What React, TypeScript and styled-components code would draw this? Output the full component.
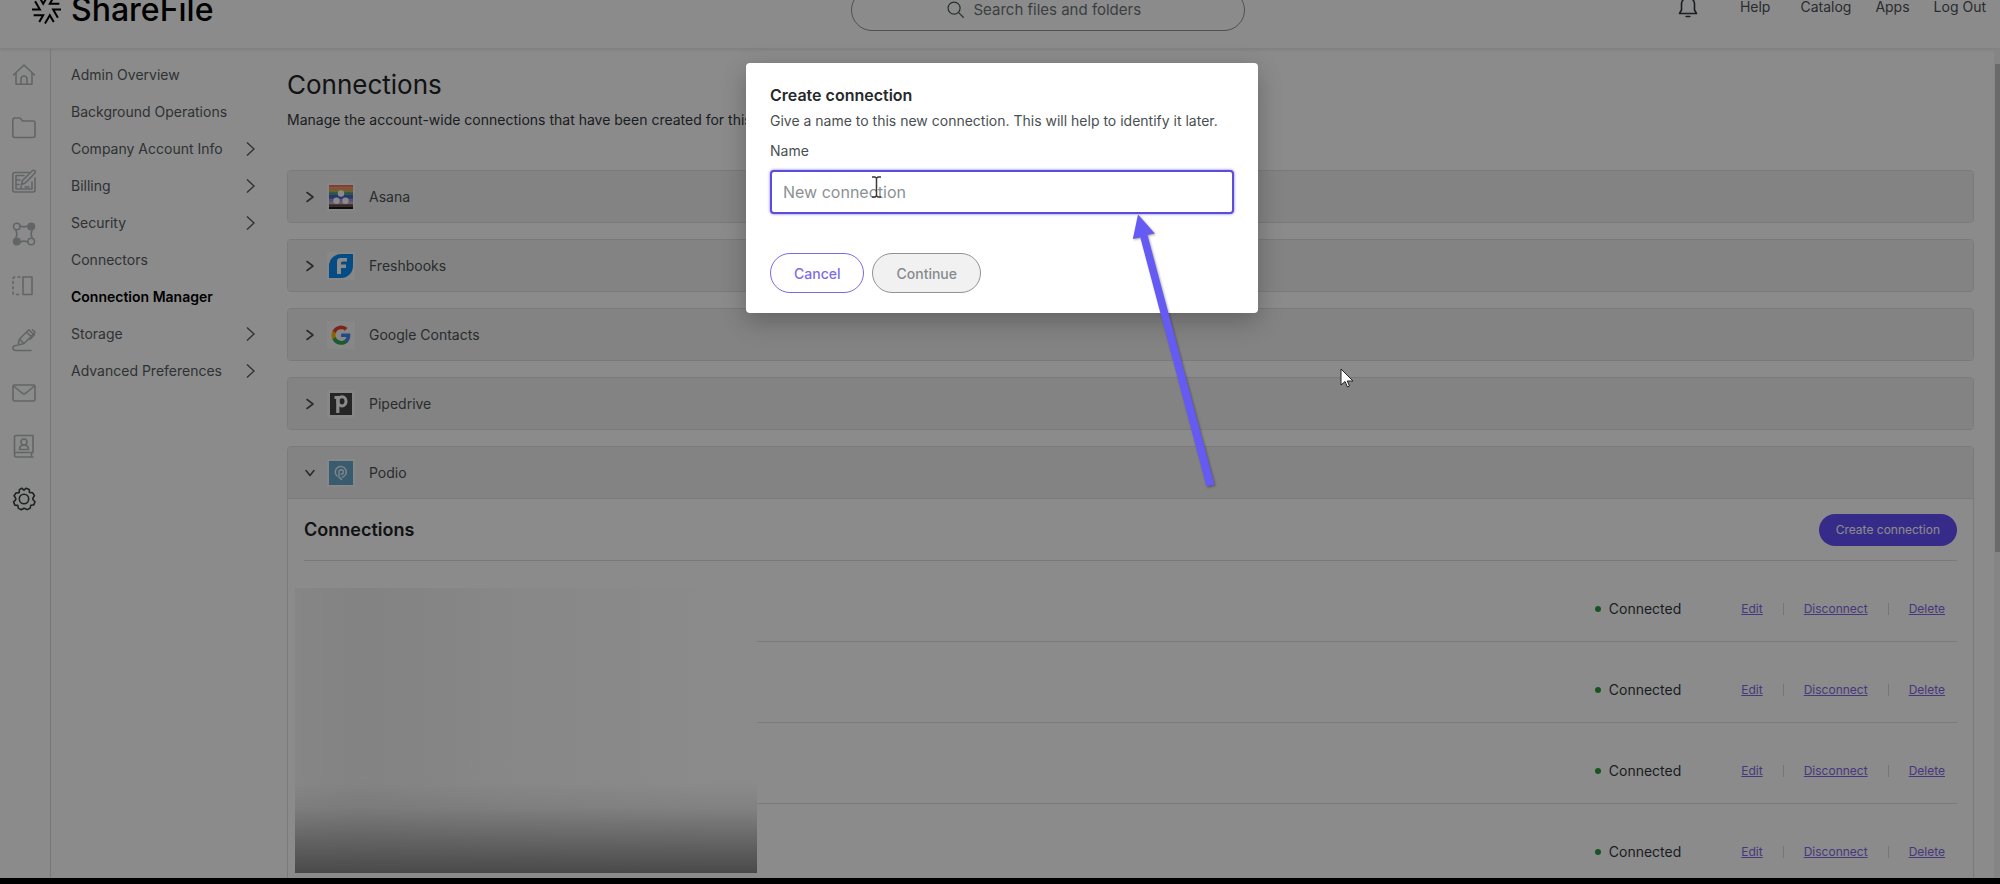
import React from "react";
import styled, { createGlobalStyle } from "styled-components";

const GlobalStyle = createGlobalStyle`
  *, *::before, *::after { box-sizing: border-box; }
  body {
    margin: 0;
    overflow: hidden;
    background: #000;
    color: #33383b;
    font-family: Inter, "Liberation Sans", sans-serif;
    font-size: 14px;
    line-height: 20px;
  }
  button, input { font-family: inherit; }
`;

const Shell = styled.div`
  position: relative;
  display: flex;
  flex-direction: column;
  height: calc(100vh - 6px);
  overflow: hidden;
  background: #fff;
`;

/* Header */
const Header = styled.header`
  display: grid;
  grid-template-columns: 21fr 394px 19fr;
  align-items: center;
  flex: none;
  height: 78px;
  margin-top: -29px;
  padding: 0 14px 0 32px;
  border-bottom: 1px solid #eceeee;
  box-shadow: 0 1px 3px rgba(0, 0, 0, 0.1);
`;

const Brand = styled.a`
  display: flex;
  align-items: center;
  gap: 10px;
  color: #000;
  font-size: 32px;
  font-weight: 500;
  line-height: 40px;
  text-decoration: none;
`;

const SearchBox = styled.label`
  display: flex;
  align-items: center;
  justify-content: center;
  gap: 10px;
  height: 42px;
  border: 1px solid #8f9799;
  border-radius: 21px;
  color: #4c5356;
`;

const SearchInput = styled.input`
  width: 176px;
  padding: 0;
  border: 0;
  outline: 0;
  background: none;
  font-size: 15px;
  &::placeholder { color: #6c7376; opacity: 1; }
`;

const HeaderNav = styled.nav`
  display: flex;
  align-items: center;
  justify-content: flex-end;
  gap: 24px;
  padding-bottom: 5px;
`;

const HeaderLink = styled.a<{ $spaced?: boolean }>`
  margin-right: ${(p) => (p.$spaced ? 6 : 0)}px;
  color: #4c5154;
  text-decoration: none;
`;

const IconButton = styled.button`
  display: flex;
  margin-right: 18px;
  padding: 0;
  border: 0;
  background: none;
  color: #33383b;
`;

/* Body */
const Body = styled.div`
  display: flex;
  flex: 1;
  min-height: 0;
`;

const Rail = styled.nav`
  display: flex;
  flex-direction: column;
  align-items: center;
  gap: 29px;
  flex: none;
  width: 51px;
  padding: 14px 2px 0 0;
  border-right: 1px solid #d9dcdd;
`;

const RailLink = styled.a<{ $active?: boolean }>`
  display: flex;
  color: ${(p) => (p.$active ? "#3a3f41" : "#b4b9bb")};
`;

const SubNav = styled.nav`
  display: flex;
  flex-direction: column;
  flex: none;
  width: 236px;
  padding: 7px 32px 0 20px;
`;

const SubNavLink = styled.a<{ $active?: boolean }>`
  display: flex;
  align-items: center;
  justify-content: space-between;
  height: 37px;
  color: ${(p) => (p.$active ? "#000" : "#565c60")};
  font-weight: ${(p) => (p.$active ? 600 : 400)};
  text-decoration: none;
`;

const Main = styled.main`
  display: flex;
  flex-direction: column;
  flex: 1;
  min-width: 0;
  padding: 20px 20px 0 0;
`;

const PageTitle = styled.h1`
  margin: 0;
  color: #202426;
  font-size: 26px;
  font-weight: 400;
  line-height: 32px;
`;

const PageText = styled.p`
  margin: 9px 0 40px;
`;

const Accordion = styled.div`
  display: flex;
  flex-direction: column;
  gap: 16px;
`;

const Item = styled.section`
  flex: none;
  overflow: hidden;
  border: 1px solid #dde1e1;
  border-radius: 4px;
`;

const ItemHeader = styled.button<{ $open?: boolean }>`
  display: flex;
  align-items: center;
  width: 100%;
  height: ${(p) => (p.$open ? 52 : 51)}px;
  padding: 0 13px;
  border: 0;
  border-bottom: ${(p) => (p.$open ? "1px solid #dde1e1" : "0")};
  background: #f1f1f1;
  color: #4c5154;
  font-size: 14px;
`;

const AppTile = styled.span`
  display: flex;
  margin: 0 14px 0 8px;
  padding: 2px;
  background: #f8f8f8;
`;

const Panel = styled.div`
  position: relative;
  padding: 0 16px;
`;

const PanelHeader = styled.div`
  display: flex;
  align-items: center;
  justify-content: space-between;
  height: 62px;
  border-bottom: 1px solid #dde1e1;
`;

const PanelTitle = styled.h2`
  margin: 0;
  color: #202426;
  font-size: 18px;
  font-weight: 600;
  line-height: 24px;
`;

const CreateButton = styled.button`
  height: 32px;
  padding: 0 17px;
  border: 0;
  border-radius: 16px;
  background: #6650fb;
  color: #fff;
  font-size: 12px;
`;

const Rows = styled.ul`
  margin: 0;
  padding: 0;
  list-style: none;
`;

const Row = styled.li`
  display: flex;
  align-items: center;
  justify-content: flex-end;
  height: 81px;
  padding: 16px 12px 0 0;
  border-bottom: 1px solid #dde1e1;
`;

const Status = styled.span`
  display: flex;
  align-items: center;
  gap: 8px;
  margin-right: 60px;
  &::before {
    content: "";
    width: 6px;
    height: 6px;
    border-radius: 50%;
    background: #2c9a3f;
  }
`;

const RowActions = styled.span`
  display: flex;
  align-items: center;
  gap: 20px;
`;

const RowLink = styled.a`
  color: #7f68e4;
  font-size: 12px;
  text-decoration: underline;
`;

const Divider = styled.span`
  width: 1px;
  height: 12px;
  background: #d3d7d8;
`;

const Redaction = styled.div`
  position: absolute;
  top: 89px;
  left: 7px;
  width: 462px;
  height: 285px;
  background:
    linear-gradient(to bottom, rgba(135, 135, 135, 0) 68%, rgba(135, 135, 135, 0.14) 77%, rgba(135, 135, 135, 0.55) 88%, #878787 100%),
    linear-gradient(to right, #f6f6f6 0%, #f0f0f0 14%, #f8f8f8 45%, #ffffff 90%);
`;

const ScrollTrack = styled.div`
  flex: none;
  width: 6px;
  padding-top: 15px;
  background: #f4f4f4;
`;

const ScrollThumb = styled.div`
  height: 60%;
  margin-left: 1px;
  background: #c3c3c3;
`;

/* Dialog */
const Overlay = styled.div`
  position: absolute;
  inset: 0;
  display: flex;
  align-items: flex-start;
  justify-content: center;
  padding: 63px 0 0 4px;
  background: rgba(0, 0, 0, 0.455);
`;

const Dialog = styled.form`
  position: relative;
  display: flex;
  flex-direction: column;
  width: 512px;
  padding: 20px 24px;
  border-radius: 4px;
  background: #fff;
  box-shadow: 0 8px 24px rgba(0, 0, 0, 0.25);
  line-height: 24px;
`;

const DialogTitle = styled.h2`
  margin: 0;
  color: #26292b;
  font-size: 16px;
  font-weight: 600;
  line-height: 24px;
`;

const DialogText = styled.p`
  margin: 2px 0 6px;
  color: #4a4f52;
`;

const FieldLabel = styled.label`
  color: #4a4f52;
`;

const TextField = styled.input`
  height: 44px;
  margin: 7px 0 39px;
  padding: 0 11px;
  border: 2px solid #5c4dd6;
  border-radius: 4px;
  outline: 0;
  box-shadow: 0 0 3px #7b6cf5;
  font-size: 16px;
  &::placeholder { color: #8b9193; opacity: 1; }
`;

const DialogActions = styled.div`
  display: flex;
  gap: 8px;
`;

const PillButton = styled.button<{ $muted?: boolean }>`
  height: 40px;
  padding: 0 23px;
  border: 1px solid ${(p) => (p.$muted ? "#8d9496" : "#7a6ae0")};
  border-radius: 20px;
  background: ${(p) => (p.$muted ? "#f1f1f1" : "#fff")};
  color: ${(p) => (p.$muted ? "#858b8e" : "#7d6de6")};
  font-size: 14px;
  font-weight: 500;
`;

/* Marks that float over the page */
const Pointer = styled.svg<{ $x: number; $y: number }>`
  position: absolute;
  left: ${(p) => p.$x}px;
  top: ${(p) => p.$y}px;
  overflow: visible;
  pointer-events: none;
`;

const ArrowShape = styled.path`
  fill: #665af5;
  filter: drop-shadow(1px 1px 1px rgba(0, 0, 0, 0.35));
`;

const Stroke = ({ size = 24, children, width = 1.6 }: { size?: number; width?: number; children: React.ReactNode }) => (
  <svg width={size} height={size} viewBox="0 0 24 24" fill="none" stroke="currentColor" strokeWidth={width} strokeLinecap="round" strokeLinejoin="round" aria-hidden="true">
    {children}
  </svg>
);

const railIcons: { label: string; art: React.ReactNode; active?: boolean }[] = [
  { label: "Home", art: <><path d="M1.5 12 12 2l10.500 10M4 10v11.300h16V10" /><path d="M9 21.300V16a3 3 0 0 1 6 0v5.300" /></> },
  { label: "Folders", art: <path d="M.8 4a2 2 0 0 1 2-2H8l2.500 3H21a2 2 0 0 1 2 2v12.500a2 2 0 0 1-2 2H2.800a2 2 0 0 1-2-2z" /> },
  { label: "Projects", art: <><path d="M17 3.500H2.800a2 2 0 0 0-2 2V21a2 2 0 0 0 2 2H21a2 2 0 0 0 2-2V9" /><path d="M12 6.500H4V20h16v-7M4 11h4M4 15.500h3M9 20v-3M13 18h4" /><path d="m9.500 15.500 1-4L20.300 1.800a1.700 1.700 0 0 1 2.500 2.400L13.300 14z" /></> },
  { label: "Workflows", art: <><path d="M8.500 4c2 1 5 1 7 0M4 8.500c1 2 1 5 0 7M20 8.500c-1 2-1 5 0 7M8.500 20c2-1 5-1 7 0" /><circle cx="4.800" cy="4.500" r="3.300" /><circle cx="19.200" cy="19.500" r="3.300" /><circle cx="19.200" cy="4.500" r="3.300" fill="currentColor" /><circle cx="4.800" cy="19.500" r="3.300" fill="currentColor" /></> },
  { label: "Templates", art: <><path d="M11 2h9v17.500h-9z" /><path d="M8 2H3a2 2 0 0 0-2 2v14a1.500 1.500 0 0 0 1.500 1.500H8" strokeDasharray="2 3.200" /></> },
  { label: "Signatures", art: <><path d="m6 17 1.500-6L16.800 1.800l4.500 4.400L12 15.500zM7.500 11l4.500 4.500M14.500 4l4.500 4.500" /><path d="m21.300 6.200 1.700-2-2.500-2.500M22.500 6.500 18 11.500" /><path d="M5 17.500c-5-.5-5.500 5-1 5h15" /></> },
  { label: "Inbox", art: <><rect x="1" y="4" width="22" height="16" rx="1.500" /><path d="m1.500 5 8.500 7q2 1.500 4 0l8.500-7" /></> },
  { label: "People", art: <><path d="M21 18.500V1.500H4a1.500 1.500 0 0 0-1.500 1.500v18A2 2 0 0 0 4.500 23H21M2.500 20a2 2 0 0 1 2-1.500H21M19.500 18.500V23" /><circle cx="12" cy="8" r="3" /><path d="M7.500 15.500c0-4 2-4.500 4.500-4.500s4.500.5 4.500 4.500z" /></> },
  {
    label: "Settings",
    active: true,
    art: <><circle cx="12" cy="12" r="4.700" /><path d="M9.800 1.200 12 3.200l2.200-2 3 1.200.2 3 3.200.4 1.900 2.800-1.700 2.600.200 1.500 2 2-1.200 3.200-3 .3-.6 3-3 1.400L12 21.200l-2.600 1.600-3-1.400-.6-3-3-.3-1.200-3.200 2-2 .2-1.500-1.700-2.600 1.900-2.800 3.200-.4.200-3z" /></>,
  },
];

const links: { label: string; more?: boolean; active?: boolean }[] = [
  { label: "Admin Overview" },
  { label: "Background Operations" },
  { label: "Company Account Info", more: true },
  { label: "Billing", more: true },
  { label: "Security", more: true },
  { label: "Connectors" },
  { label: "Connection Manager", active: true },
  { label: "Storage", more: true },
  { label: "Advanced Preferences", more: true },
];

const asanaStripes = ["#f2705e", "#f09060", "#c8b050", "#4f9a78", "#3a6fc0", "#5a66c8", "#a48cd4", "#c4a8cc", "#6a4a48", "#1c1618"];

const apps: { name: string; open?: boolean; art: React.ReactNode }[] = [
  {
    name: "Asana",
    art: <>
      {asanaStripes.map((c, i) => (
        <rect key={c} y={i * 2.4} width="24" height="2.500" fill={c} />
      ))}
      <g fill="#fff"><circle cx="12" cy="8.500" r="3.200" /><circle cx="7.500" cy="15.800" r="3.200" /><circle cx="16.500" cy="15.800" r="3.200" /></g>
    </>,
  },
  {
    name: "Freshbooks",
    art: <>
      <path d="M12 0h12v12a12 12 0 0 1-12 12H0V12A12 12 0 0 1 12 0z" fill="#0a8cf5" />
      <path d="M8 20V7.500Q8 4 11.500 4H18v3.500h-4.500Q12 7.500 12 9v1.500h5V14h-5v6z" fill="#fff" />
    </>,
  },
  {
    name: "Google Contacts",
    art: <g transform="translate(2.500 2.500) scale(.8)">
      <path fill="#4285f4" d="M23.500 12.300c0-.8-.1-1.600-.2-2.300H12v4.500h6.500a5.500 5.500 0 0 1-2.400 3.600v3h3.900c2.300-2.100 3.500-5.200 3.500-8.800z" />
      <path fill="#34a853" d="M12 24c3.200 0 6-1.100 8-2.900l-3.900-3a7.200 7.200 0 0 1-10.800-3.800h-4v3.100A12 12 0 0 0 12 24z" />
      <path fill="#fbbc05" d="M5.300 14.300a7.200 7.200 0 0 1 0-4.600V6.600h-4a12 12 0 0 0 0 10.800z" />
      <path fill="#ea4335" d="M12 4.800c1.800 0 3.300.6 4.600 1.800L20 3.200A12 12 0 0 0 1.300 6.600l4 3.100A7.200 7.200 0 0 1 12 4.800z" />
    </g>,
  },
  {
    name: "Pipedrive",
    art: <>
      <rect x="1" y="1" width="22" height="22" fill="#444" />
      <path d="M8.800 21V5.500H5.500" fill="none" stroke="#fff" strokeWidth="3.200" />
      <ellipse cx="13" cy="9.300" rx="4" ry="4.600" fill="none" stroke="#fff" strokeWidth="3" />
    </>,
  },
  {
    name: "Podio",
    open: true,
    art: <>
      <rect width="24" height="24" fill="#68a8cc" />
      <path d="M8 15a5.500 5.500 0 1 1 5.500 1.200M12.500 18.500 10 16v-5.200a2.200 2.200 0 1 1 2.200 2.400" fill="none" stroke="#e6f1f7" strokeWidth="1.500" strokeLinecap="round" strokeLinejoin="round" />
    </>,
  },
];

const connections = [1, 2, 3, 4];

const Chevron = ({ down }: { down?: boolean }) => (
  <svg width="18" height="18" viewBox="0 0 18 18" fill="none" stroke="currentColor" strokeWidth="1.600" strokeLinecap="round" strokeLinejoin="round" aria-hidden="true">
    <path d={down ? "m5 6.500 4 5 4-5" : "m6 4.500 6 4.500-6 4.500"} />
  </svg>
);

const Logo = () => (
  <svg width="29" height="29" viewBox="-14 -14 28 28" fill="none" stroke="#000" strokeWidth="1.900" aria-hidden="true">
    {[0, 60, 120, 180, 240, 300].map((a) => (
      <path key={a} d="M11 8 6.400 0H14" transform={`rotate(${a})`} />
    ))}
  </svg>
);

export default function App() {
  return (
    <>
      <GlobalStyle />
      <Shell>
        <Header>
          <Brand href="#"><Logo />ShareFile</Brand>
          <SearchBox>
            <Stroke size={17} width={1.7}><circle cx="10" cy="10" r="8.500" /><path d="m16.500 16.500 6.500 6.500" /></Stroke>
            <SearchInput type="text" placeholder="Search files and folders" aria-label="Search files and folders" />
          </SearchBox>
          <HeaderNav>
            <IconButton type="button" aria-label="Notifications">
              <svg width="20" height="22" viewBox="0 0 20 22" fill="none" stroke="currentColor" strokeWidth="1.600" strokeLinejoin="round">
                <path d="M1.500 17.500 3.500 14V8a6.500 6.500 0 0 1 13 0v6l2 3.500z" /><path d="M8.200 20.500h3.600" strokeLinecap="round" />
              </svg>
            </IconButton>
            <HeaderLink href="#" $spaced>Help</HeaderLink>
            <HeaderLink href="#">Catalog</HeaderLink>
            <HeaderLink href="#">Apps</HeaderLink>
            <HeaderLink href="#">Log Out</HeaderLink>
          </HeaderNav>
        </Header>
        <Body>
          <Rail aria-label="Sections">
            {railIcons.map((r) => (
              <RailLink key={r.label} href="#" aria-label={r.label} $active={r.active}>
                <Stroke>{r.art}</Stroke>
              </RailLink>
            ))}
          </Rail>
          <SubNav aria-label="Admin">
            {links.map((l) => (
              <SubNavLink key={l.label} href="#" $active={l.active}>
                {l.label}
                {l.more && (
                  <svg width="9" height="16" viewBox="0 0 9 16" fill="none" stroke="currentColor" strokeWidth="1.400" aria-hidden="true"><path d="m1 1.500 7 6.500-7 6.500" /></svg>
                )}
              </SubNavLink>
            ))}
          </SubNav>
          <Main>
            <PageTitle>Connections</PageTitle>
            <PageText>Manage the account-wide connections that have been created for this account.</PageText>
            <Accordion>
              {apps.map((a) => (
                <Item key={a.name}>
                  <ItemHeader type="button" $open={a.open} aria-expanded={!!a.open}>
                    <Chevron down={a.open} />
                    <AppTile><svg width="24" height="24" viewBox="0 0 24 24" aria-hidden="true">{a.art}</svg></AppTile>
                    {a.name}
                  </ItemHeader>
                  {a.open && (
                    <Panel>
                      <PanelHeader>
                        <PanelTitle>Connections</PanelTitle>
                        <CreateButton type="button">Create connection</CreateButton>
                      </PanelHeader>
                      <Rows>
                        {connections.map((id) => (
                          <Row key={id}>
                            <Status>Connected</Status>
                            <RowActions>
                              <RowLink href="#">Edit</RowLink>
                              <Divider />
                              <RowLink href="#">Disconnect</RowLink>
                              <Divider />
                              <RowLink href="#">Delete</RowLink>
                            </RowActions>
                          </Row>
                        ))}
                      </Rows>
                      <Redaction />
                    </Panel>
                  )}
                </Item>
              ))}
            </Accordion>
          </Main>
          <ScrollTrack><ScrollThumb /></ScrollTrack>
        </Body>
        <Overlay>
          <Dialog role="dialog" aria-labelledby="dialog-title">
            <DialogTitle id="dialog-title">Create connection</DialogTitle>
            <DialogText>Give a name to this new connection. This will help to identify it later.</DialogText>
            <FieldLabel htmlFor="connection-name">Name</FieldLabel>
            <TextField id="connection-name" type="text" placeholder="New connection" />
            <DialogActions>
              <PillButton type="button">Cancel</PillButton>
              <PillButton type="submit" $muted disabled>Continue</PillButton>
            </DialogActions>
            <Pointer $x={125} $y={113} width="11" height="22" viewBox="0 0 11 22" fill="none" stroke="#3a3a3a" strokeWidth="1.500" aria-hidden="true">
              <path d="M1 1h3l1.500 1L7 1h3M5.500 2v18M1 21h3l1.500-1L7 21h3" />
            </Pointer>
            <Pointer $x={386} $y={151} width="84" height="274" viewBox="0 0 84 274" aria-hidden="true">
              <ArrowShape d="M6 .5.8 25l7.500-1.500L74.500 272.500l8-1.800L15.500 21l7.300-1.500z" />
            </Pointer>
            <Pointer $x={594} $y={305} width="15" height="21" viewBox="0 0 15 21" aria-hidden="true">
              <path d="M1 1v16l4-3.500 2.500 5.500 2-1-2.300-5H13z" fill="#fff" stroke="#222" strokeWidth="1" />
            </Pointer>
          </Dialog>
        </Overlay>
      </Shell>
    </>
  );
}
